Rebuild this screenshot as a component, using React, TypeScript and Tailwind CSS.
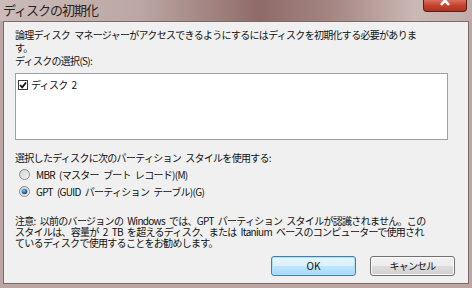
import React from "react";

function CheckBox() {
  return (
    <span className="w-[10px] h-[10px] border border-[#3c3c3c] bg-white flex items-center justify-center shrink-0">
      <svg width="8" height="8" viewBox="0 0 8 8">
        <path d="M1 4 L3.2 6.3 L7 1.5" fill="none" stroke="#111" strokeWidth="1.8" />
      </svg>
    </span>
  );
}

function Radio({ checked }: { checked?: boolean }) {
  return (
    <svg width="11" height="11" viewBox="0 0 11 11" className="shrink-0">
      <defs>
        <linearGradient id="rfill" x1="0" y1="0" x2="1" y2="1">
          <stop offset="0" stopColor="#cfcfcf" />
          <stop offset="1" stopColor="#f7f7f7" />
        </linearGradient>
        <radialGradient id="rdot" cx="0.4" cy="0.35" r="0.7">
          <stop offset="0" stopColor="#8ec3ec" />
          <stop offset="0.6" stopColor="#2a6aa6" />
          <stop offset="1" stopColor="#17406a" />
        </radialGradient>
      </defs>
      <circle cx="5.5" cy="5.5" r="5" fill="url(#rfill)" stroke="#8b8b8b" strokeWidth="1" />
      {checked && <circle cx="5.5" cy="5.5" r="2.8" fill="url(#rdot)" />}
    </svg>
  );
}

export default function App() {
  return (
    <div className="w-[472px] h-[288px] overflow-hidden flex flex-col bg-[#bba6a3] font-['Noto_Sans_CJK_JP',sans-serif] text-black">
      {/* タイトルバー */}
      <div className="relative h-[21px] shrink-0 bg-[linear-gradient(90deg,#cbbcb9_0%,#bba6a3_30%,#8f6b68_55%,#a48582_70%,#cbb9b5_88%,#c1aca8_100%)]">
        <div className="pl-[3px] pt-[1px] text-[13px] leading-[18px] tracking-[-1px] text-[#2c2222]">
          ディスクの初期化
        </div>
        <div className="absolute right-[5px] top-0 w-[44px] h-[12px] rounded-b-[4px] border border-t-0 border-[#5e1d15] bg-[linear-gradient(180deg,#d9705d_0%,#c4432f_50%,#b1311f_100%)] flex justify-center">
          <svg width="12" height="8" viewBox="0 0 12 8" className="-mt-[1px]">
            <path d="M2 -3 L10 6 M10 -3 L2 6" stroke="#fff" strokeWidth="2.6" />
          </svg>
        </div>
      </div>

      {/* 本体 */}
      <div className="flex-1 px-[3px] pb-[4px] flex">
        <div className="flex-1 bg-[#f0f0f0] border border-[#7d6b69] pl-[11px] pt-[6px] text-[10px] tracking-[-0.7px] [word-spacing:2.5px] text-[#111] flex flex-col">
          <div className="leading-[13px] whitespace-nowrap">
            論理ディスク マネージャーがアクセスできるようにするにはディスクを初期化する必要がありま
            <br />
            す。
          </div>
          <div className="leading-[13px]">ディスクの選択(S):</div>

          <div className="mt-[6px] w-[433px] h-[67px] bg-white border border-[#a0a0a0] pl-[2px] pt-[5px]">
            <div className="flex items-center gap-[3px] leading-[12px]">
              <CheckBox />
              <span>ディスク 2</span>
            </div>
          </div>

          <div className="mt-[11px] leading-[13px]">
            選択したディスクに次のパーティション スタイルを使用する:
          </div>
          <div className="mt-[2px] pl-[4px] flex flex-col">
            <div className="h-[17px] flex items-center gap-[6px]">
              <Radio />
              <span>MBR (マスター ブート レコード)(M)</span>
            </div>
            <div className="h-[17px] flex items-center gap-[6px]">
              <Radio checked />
              <span>GPT (GUID パーティション テーブル)(G)</span>
            </div>
          </div>

          <div className="mt-[15px] leading-[11px] whitespace-nowrap">
            注意: 以前のバージョンの Windows では、GPT パーティション スタイルが認識されません。この
            <br />
            スタイルは、容量が 2 TB を超えるディスク、または Itanium ベースのコンピューターで使用され
            <br />
            ているディスクで使用することをお勧めします。
          </div>

          <div className="mt-[8px] flex justify-end gap-[14px] pr-[13px] tracking-normal">
            <button className="w-[85px] h-[20px] rounded-[3px] border border-[#3c7fb1] bg-[linear-gradient(180deg,#eaf6fd_0%,#d9f0fc_50%,#bee6fd_51%,#a7d9f5_100%)] shadow-[inset_0_0_0_1px_#aee0f8] text-[10px] leading-none">
              OK
            </button>
            <button className="w-[85px] h-[20px] rounded-[3px] border border-[#707070] bg-[linear-gradient(180deg,#f2f2f2_0%,#ebebeb_50%,#dddddd_51%,#cfcfcf_100%)] shadow-[inset_0_0_0_1px_#fcfcfc] text-[10px] leading-none tracking-[-0.8px]">
              キャンセル
            </button>
          </div>
        </div>
      </div>
    </div>
  );
}
